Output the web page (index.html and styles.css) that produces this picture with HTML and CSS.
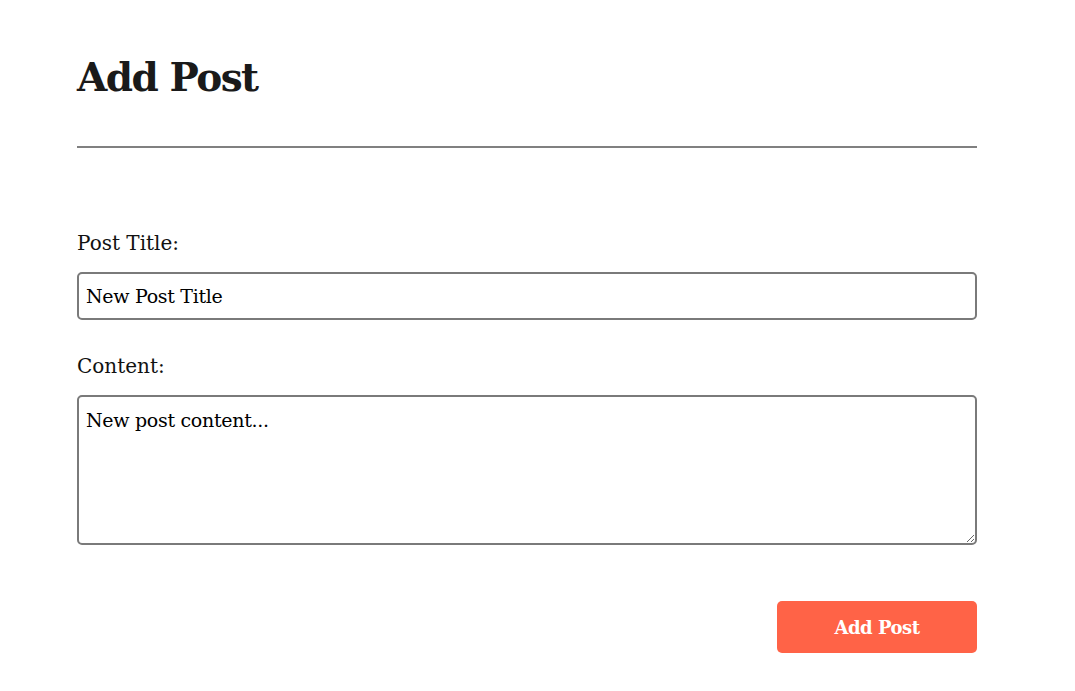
FILE: index.html
```html
<!DOCTYPE html>
<html>
<head>
<meta charset="utf-8">
<link rel="stylesheet" href="styles.css">
</head>
<body>
<main class="page">
  <h1 class="title">Add Post</h1>
  <hr class="rule">
  <form class="form">
    <label class="label" for="t">Post Title:</label>
    <input class="field" id="t" type="text" value="New Post Title">
    <label class="label" for="c">Content:</label>
    <textarea class="field area" id="c">New post content...</textarea>
    <div class="actions">
      <button class="btn" type="button">Add Post</button>
    </div>
  </form>
</main>
</body>
</html>
```
FILE: styles.css
```css
* { box-sizing: border-box; }
body {
  margin: 0;
  background: #fff;
  font-family: "DejaVu Serif", "Liberation Serif", serif;
  color: #111;
}
.page {
  width: 900px;
  margin: 0 0 0 77px;
  padding-top: 52px;
}
.title {
  margin: 0;
  font-size: 39px;
  line-height: 50px;
  font-weight: bold;
  color: #1a1a1a;
  letter-spacing: -1.5px;
}
.rule {
  margin: 44px 0 0;
  border: 0;
  height: 2px;
  background: #808080;
}
.form {
  display: flex;
  flex-direction: column;
  padding-top: 82px;
}
.label {
  font-size: 20px;
  line-height: 26px;
  margin-bottom: 16px;
  color: #111;
}
.field {
  width: 100%;
  height: 48px;
  border: 2px solid #7a7a7a;
  border-radius: 5px;
  padding: 0 7px;
  font-family: inherit;
  font-size: 19px;
  letter-spacing: -0.3px;
  color: #000;
  background: #fff;
  margin-bottom: 33px;
}
.area {
  height: 150px;
  padding: 11px 7px;
  resize: vertical;
  line-height: 24px;
  margin-bottom: 56px;
}
.actions {
  display: flex;
  justify-content: flex-end;
}
.btn {
  width: 200px;
  height: 52px;
  border: 0;
  border-radius: 5px;
  background: #ff6347;
  color: #fff;
  font-family: inherit;
  font-size: 18px;
  letter-spacing: -0.5px;
  font-weight: bold;
}
```
